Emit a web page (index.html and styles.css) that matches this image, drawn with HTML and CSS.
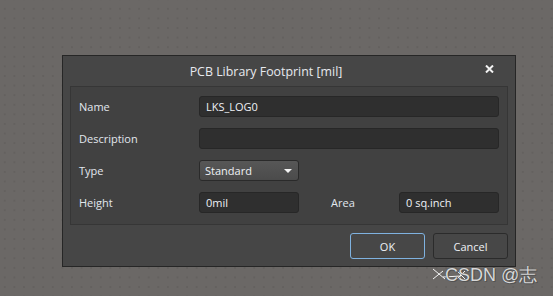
FILE: index.html
```html
<!DOCTYPE html>
<html lang="en">

<head>
    <meta charset="UTF-8">
    <title>PCB Library Footprint</title>
    <link rel="stylesheet" href="styles.css">
</head>

<body>
    <div class="dialog">
        <div class="title-bar">
            <span class="title">PCB Library Footprint [mil]</span>
            <svg class="close" width="9" height="8" viewBox="0 0 9 8">
                <path d="M1 0.5 L8 7.5 M8 0.5 L1 7.5" stroke="#f2f2f2" stroke-width="2" />
            </svg>
        </div>
        <div class="panel">
            <div class="row">
                <label>Name</label>
                <div class="field wide">LKS_LOG0</div>
            </div>
            <div class="row">
                <label>Description</label>
                <div class="field wide"></div>
            </div>
            <div class="row">
                <label>Type</label>
                <div class="select">
                    <span>Standard</span>
                    <span class="arrow"></span>
                </div>
            </div>
            <div class="row">
                <label>Height</label>
                <div class="field short">0mil</div>
                <label class="area-label">Area</label>
                <div class="field short">0 sq.inch</div>
            </div>
        </div>
        <div class="buttons">
            <div class="btn ok">OK</div>
            <div class="btn">Cancel</div>
        </div>
    </div>

    <div class="watermark">
        <svg width="40" height="16" viewBox="0 0 40 16">
            <path d="M2 2 L14 12 M2 12 L12 4 M12 10 L30 9 M26 4 L34 12 M26 12 L34 4" stroke="#f4f4f4" stroke-width="1" fill="none" />
        </svg>
        <span>CSDN @志</span>
    </div>
</body>

</html>
```

FILE: styles.css
```css
body {
    margin: 0;
    padding: 0;
    width: 553px;
    height: 296px;
    overflow: hidden;
    position: relative;
    font-family: "Open Sans", "Noto Sans", sans-serif;
    font-size: 11px;
    background-color: #6b6866;
    background-image: radial-gradient(circle, #64615f 0.7px, transparent 0.9px);
    background-size: 9.6px 9.6px;
    background-position: 0 4px;
}

.dialog {
    margin: 55px 0 0 62px;
    width: 452px;
    height: 210px;
    border: 1px solid #262626;
    background-color: #464646;
    display: flex;
    flex-direction: column;
}

.title-bar {
    height: 30px;
    display: flex;
    align-items: center;
    justify-content: center;
    position: relative;
    padding-right: 46px;
    color: #e6e9ee;
    font-size: 12.4px;
}

.title {
    margin-top: 1px;
}

.close {
    position: absolute;
    right: 21px;
    top: 9px;
}

.panel {
    margin: 0 7px;
    height: 117px;
    padding: 9px 8px 11px 8px;
    border: 1px solid #363636;
    background-color: #414141;
    display: flex;
    flex-direction: column;
    gap: 11px;
}

.row {
    display: flex;
    align-items: center;
    height: 21px;
}

.row label {
    width: 120px;
    color: #e2e7ee;
}

.row .area-label {
    width: 68px;
    margin-left: 32px;
}

.field {
    height: 19px;
    line-height: 19px;
    border: 1px solid #272727;
    border-radius: 3px;
    background-color: #2f2f2f;
    color: #eef1f5;
    padding-left: 6px;
    box-sizing: content-box;
}

.wide {
    width: 292px;
}

.short {
    width: 92px;
}

.select {
    width: 98px;
    height: 19px;
    border: 1px solid #2a2a2a;
    border-radius: 3px;
    background: linear-gradient(#575757, #4b4b4b);
    color: #eef1f5;
    display: flex;
    align-items: center;
    justify-content: space-between;
}

.select span:first-child {
    margin-left: 5px;
}

.arrow {
    width: 0;
    height: 0;
    border-left: 4px solid transparent;
    border-right: 4px solid transparent;
    border-top: 4px solid #f4f4f4;
    margin-right: 6px;
}

.buttons {
    display: flex;
    justify-content: flex-end;
    gap: 8px;
    margin: 8px 7px 0 0;
}

.btn {
    width: 73px;
    height: 24px;
    border: 1px solid #2b2b2b;
    border-radius: 3px;
    background-color: #474747;
    color: #eef1f5;
    display: flex;
    align-items: center;
    justify-content: center;
}

.btn.ok {
    border-color: #7fb2e0;
}

.watermark {
    position: absolute;
    left: 431px;
    top: 263px;
    display: flex;
    align-items: center;
    color: #d8d8d8;
    font-family: "Liberation Sans", sans-serif;
    font-size: 18px;
    text-shadow: 0 0 1px #3a3a3a, 1px 1px 0 #555;
}

.watermark svg {
    margin-right: -26px;
}
```
